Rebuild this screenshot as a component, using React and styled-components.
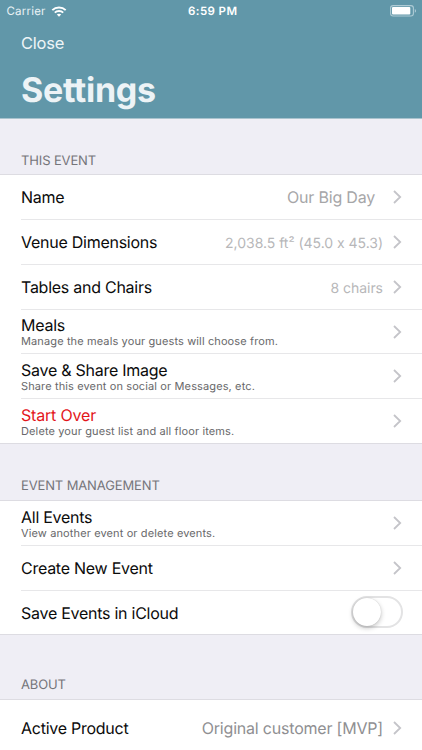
import React, { useState } from 'react'
import styled, { createGlobalStyle } from 'styled-components'

const GlobalStyle = createGlobalStyle`
  * {
    box-sizing: border-box;
  }

  body {
    margin: 0;
    background: #efeef5;
    font-family: Inter, 'Liberation Sans', sans-serif;
    text-rendering: geometricPrecision;
    overflow: hidden;
  }
`

const Screen = styled.div`
  height: 750px;
  overflow: hidden;
  background: #efeef5;
`

const Header = styled.header`
  height: 119px;
  background: #6197a9;
  color: white;
  border-bottom: 1px solid #a9c3ce;
`

const StatusBar = styled.div`
  display: grid;
  grid-template-columns: 1fr auto 1fr;
  align-items: center;
  height: 22px;
  padding: 0 5px 0 6.5px;
  font-size: 11.5px;
`

const Carrier = styled.div`
  display: flex;
  align-items: center;
  gap: 5px;
  color: #eaf3f6;
  letter-spacing: 0.2px;
`

const Time = styled.div`
  font-weight: 600;
  font-size: 11.5px;
  letter-spacing: 0.4px;
  padding-left: 2px;
`

const Battery = styled.svg`
  justify-self: end;
`

const CloseButton = styled.button`
  display: block;
  height: 42px;
  padding: 0 21px;
  border: none;
  background: transparent;
  color: #edf4f7;
  font: inherit;
  font-size: 16.5px;
  letter-spacing: -0.25px;
`

const Title = styled.h1`
  margin: 0;
  padding: 0 21px;
  color: #edf3f6;
  font-size: 34px;
  line-height: 54px;
  font-weight: 700;
  letter-spacing: -0.3px;
`

const SectionTitle = styled.h2`
  display: flex;
  align-items: flex-end;
  height: ${(props) => props.$height}px;
  margin: 0;
  padding: 0 21px ${(props) => props.$bottom || 5}px;
  color: #75757a;
  font-size: 13px;
  line-height: 17px;
  font-weight: 400;
  letter-spacing: -0.13px;
`

const List = styled.div`
  padding-left: 21px;
  background: white;
  border-top: 1px solid #dddce2;
  border-bottom: 1px solid #dddce2;
`

const Row = styled.div`
  display: flex;
  align-items: center;
  height: ${(props) => props.$height || 45}px;
  padding-right: ${(props) => props.$right || 20}px;
  border-bottom: 1px solid #e7e7e9;

  &:last-child {
    border-bottom: none;
  }
`

const Labels = styled.div`
  flex: 1;
  align-self: ${(props) => (props.$stacked ? 'flex-start' : 'center')};
  padding-top: ${(props) => props.$top || 0}px;
  white-space: nowrap;
`

const Label = styled.div`
  color: ${(props) => (props.$danger ? '#e3151a' : '#0b0b0b')};
  font-size: 16px;
  line-height: 20px;
  letter-spacing: ${(props) => (props.$danger ? -0.18 : -0.26)}px;
`

const Detail = styled.div`
  color: #68686a;
  font-size: 11px;
  line-height: 13px;
  letter-spacing: 0.12px;
`

const Value = styled.div`
  color: ${(props) => props.$color || '#a6a6a8'};
  font-size: ${(props) => props.$size || 16}px;
  line-height: 20px;
  letter-spacing: ${(props) => props.$spacing || -0.2}px;
  margin-right: ${(props) => props.$gap || 10}px;
  padding-top: ${(props) => props.$drop || 0}px;
  white-space: nowrap;
`

const Switch = styled.button`
  width: 52px;
  height: 32px;
  margin-bottom: 2px;
  padding: 0;
  border: 2px solid #e3e3e4;
  border-radius: 16px;
  background: white;
`

const Knob = styled.span`
  display: block;
  width: 28px;
  height: 28px;
  border-radius: 50%;
  background: white;
  box-shadow: 0 2px 5px rgba(0, 0, 0, 0.24), 0 0 1px rgba(0, 0, 0, 0.2);
  transform: translateX(${(props) => (props.$on ? 20 : 0)}px);
`

const Chevron = () => (
  <svg width='9' height='14' viewBox='0 0 9 14' fill='none'>
    <path d='M1 1L7.2 7L1 13' stroke='#c4c4c9' strokeWidth='1.8' />
  </svg>
)

const WifiIcon = () => (
  <svg width='16' height='11' viewBox='0 0 16 11' fill='none'>
    <path d='M1.3 4.2C5 0.5 11 0.5 14.7 4.2' stroke='white' strokeWidth='1.9' />
    <path d='M3.8 6.7C6.1 4.4 9.9 4.4 12.2 6.7' stroke='white' strokeWidth='1.9' />
    <path d='M8 10.8L5.8 8.6C7 7.5 9 7.5 10.2 8.6Z' fill='white' />
  </svg>
)

const SettingsRow = ({ label, detail, value, danger, height, top = 6, valueStyle = {} }) => (
  <Row $height={height}>
    <Labels $stacked={Boolean(detail)} $top={detail ? top : 0}>
      <Label $danger={danger}>{label}</Label>
      {detail && <Detail>{detail}</Detail>}
    </Labels>
    {value && (
      <Value
        $size={valueStyle.size}
        $color={valueStyle.color}
        $spacing={valueStyle.spacing}
        $gap={valueStyle.gap}
        $drop={valueStyle.drop}
      >
        {value}
      </Value>
    )}
    <Chevron />
  </Row>
)

const smallValue = { size: 14, color: '#b7b7b9', spacing: -0.03, drop: 3 }

const App = () => {
  const [iCloud, setICloud] = useState(false)

  return (
    <>
      <GlobalStyle />
      <Screen>
        <Header>
          <StatusBar>
            <Carrier>
              Carrier
              <WifiIcon />
            </Carrier>
            <Time>6:59 PM</Time>
            <Battery width='27' height='12' viewBox='0 0 27 12' fill='none'>
              <rect x='0.6' y='0.6' width='22.8' height='10.4' rx='2.5' stroke='#aecbd5' strokeWidth='1.1' />
              <rect x='2' y='2' width='18.3' height='7.6' rx='1' fill='white' />
              <path d='M24.8 4V7.8C26.5 7.2 26.5 4.6 24.8 4Z' fill='#aecbd5' />
            </Battery>
          </StatusBar>
          <CloseButton>Close</CloseButton>
          <Title>Settings</Title>
        </Header>

        <SectionTitle $height={55} $bottom={4}>THIS EVENT</SectionTitle>
        <List>
          <SettingsRow label='Name' value='Our Big Day' valueStyle={{ gap: 18 }} />
          <SettingsRow label='Venue Dimensions' value='2,038.5 ft² (45.0 x 45.3)' valueStyle={smallValue} />
          <SettingsRow label='Tables and Chairs' value='8 chairs' valueStyle={smallValue} />
          <SettingsRow height={44} top={5} label='Meals' detail='Manage the meals your guests will choose from.' />
          <SettingsRow label='Save & Share Image' detail='Share this event on social or Messages, etc.' />
          <SettingsRow danger height={44} label='Start Over' detail='Delete your guest list and all floor items.' />
        </List>

        <SectionTitle $height={56}>EVENT MANAGEMENT</SectionTitle>
        <List>
          <SettingsRow label='All Events' detail='View another event or delete events.' />
          <SettingsRow label='Create New Event' />
          <Row $height={43} $right={19}>
            <Labels>
              <Label>Save Events in iCloud</Label>
            </Labels>
            <Switch role='switch' aria-checked={iCloud} onClick={() => setICloud(!iCloud)}>
              <Knob $on={iCloud} />
            </Switch>
          </Row>
        </List>

        <SectionTitle $height={64}>ABOUT</SectionTitle>
        <List>
          <SettingsRow height={56} label='Active Product' value='Original customer [MVP]' valueStyle={{ color: '#8f8f92' }} />
        </List>
      </Screen>
    </>
  )
}

export default App
